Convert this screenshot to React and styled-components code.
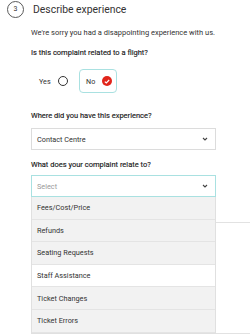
import React from "react";
import styled, { createGlobalStyle } from "styled-components";

const options = [
  "Fees/Cost/Price",
  "Refunds",
  "Seating Requests",
  "Staff Assistance",
  "Ticket Changes",
  "Ticket Errors",
];

function Chevron() {
  return (
    <svg width="6" height="4" viewBox="0 0 6 4">
      <path d="M1 1 L3 3 L5 1" fill="none" stroke="#444" strokeWidth="1.1" />
    </svg>
  );
}

function Check() {
  return (
    <svg width="6" height="5" viewBox="0 0 6 5">
      <path d="M0.8 2.6 L2.3 4 L5.2 1" fill="none" stroke="#fff" strokeWidth="1.2" />
    </svg>
  );
}

function App() {
  return (
    <Page>
      <GlobalStyle />
      <Header>
        <Step>3</Step>
        <Title>Describe experience</Title>
      </Header>
      <Content>
        <Intro>We're sorry you had a disappointing experience with us.</Intro>
        <Label $top={8}>Is this complaint related to a flight?</Label>
        <RadioRow>
          <RadioOption>
            Yes
            <Radio />
          </RadioOption>
          <RadioOption $selected>
            No
            <Radio $checked>
              <Check />
            </Radio>
          </RadioOption>
        </RadioRow>
        <Label $top={17}>Where did you have this experience?</Label>
        <Select $top={6}>
          <span>Contact Centre</span>
          <Chevron />
        </Select>
        <Label $top={9}>What does your complaint relate to?</Label>
        <SelectWrap>
          <Select $top={4} $open>
            <Placeholder>Select</Placeholder>
            <Chevron />
          </Select>
          <Menu>
            {options.map((o) => (
              <MenuItem key={o} $hover={o === "Staff Assistance"}>
                {o}
              </MenuItem>
            ))}
          </Menu>
        </SelectWrap>
        <Behind />
      </Content>
    </Page>
  );
}

const GlobalStyle = createGlobalStyle`
  body {
    margin: 0;
    background: #fff;
    font-family: Roboto, "Liberation Sans", sans-serif;
    color: #323232;
  }
`;

const Page = styled.div`
  width: 250px;
  height: 336px;
  overflow: hidden;
`;

const Header = styled.div`
  display: flex;
  align-items: center;
  height: 18px;
  padding-left: 7px;
  gap: 9px;
`;

const Step = styled.div`
  width: 15px;
  height: 15px;
  border: 1px solid #5a5a5a;
  border-radius: 50%;
  display: flex;
  align-items: center;
  justify-content: center;
  font-size: 7px;
  color: #333;
`;

const Title = styled.div`
  font-size: 10.4px;
  color: #333;
`;

const Content = styled.div`
  margin-left: 31px;
  width: 185px;
`;

const Intro = styled.div`
  margin-top: 9px;
  font-size: 7.5px;
  line-height: 12px;
  white-space: nowrap;
`;

const Label = styled.div`
  margin-top: ${(p) => p.$top}px;
  font-size: 7.5px;
  line-height: 12px;
  font-weight: 400;
  color: #1e1e1e;
  -webkit-text-stroke: 0.15px #1e1e1e;
  white-space: nowrap;
`;

const RadioRow = styled.div`
  display: flex;
  margin-top: 10px;
`;

const RadioOption = styled.div`
  box-sizing: border-box;
  height: 24px;
  width: ${(p) => (p.$selected ? "38px" : "48px")};
  padding-left: ${(p) => (p.$selected ? "6px" : "7px")};
  display: flex;
  align-items: center;
  gap: 7px;
  font-size: 7.2px;
  border: 1px solid ${(p) => (p.$selected ? "#a9e1e1" : "transparent")};
  border-radius: 4px;
`;

const Radio = styled.span`
  box-sizing: border-box;
  width: 10px;
  height: 10px;
  border-radius: 50%;
  border: ${(p) => (p.$checked ? "none" : "1px solid #333")};
  background: ${(p) => (p.$checked ? "#e1251b" : "#fff")};
  display: flex;
  align-items: center;
  justify-content: center;
`;

const SelectWrap = styled.div`
  position: relative;
  z-index: 2;
`;

const Select = styled.div`
  box-sizing: border-box;
  margin-top: ${(p) => p.$top}px;
  height: 22px;
  border: 1px solid ${(p) => (p.$open ? "#a9e1e1" : "#dcdcdc")};
  background: #fff;
  display: flex;
  align-items: center;
  justify-content: space-between;
  padding: 0 7px 0 5px;
  font-size: 7.3px;
`;

const Placeholder = styled.span`
  color: #9a9a9a;
`;

const Menu = styled.div`
  position: absolute;
  top: 100%;
  left: 0;
  right: 0;
  background: #f2f2f2;
  border: 1px solid #e0e0e0;
  border-top: none;
`;

const MenuItem = styled.div`
  box-sizing: border-box;
  height: 22.6px;
  display: flex;
  align-items: center;
  padding-left: 5px;
  font-size: 7.3px;
  background: ${(p) => (p.$hover ? "#fff" : "#f2f2f2")};
  border-bottom: 1px solid #e4e4e4;
`;

const Behind = styled.div`
  margin-top: 25px;
  margin-right: -40px;
  height: 110px;
  border-top: 1px solid #e2e2e2;
  border-bottom: 1px solid #e2e2e2;
`;

export default App;
